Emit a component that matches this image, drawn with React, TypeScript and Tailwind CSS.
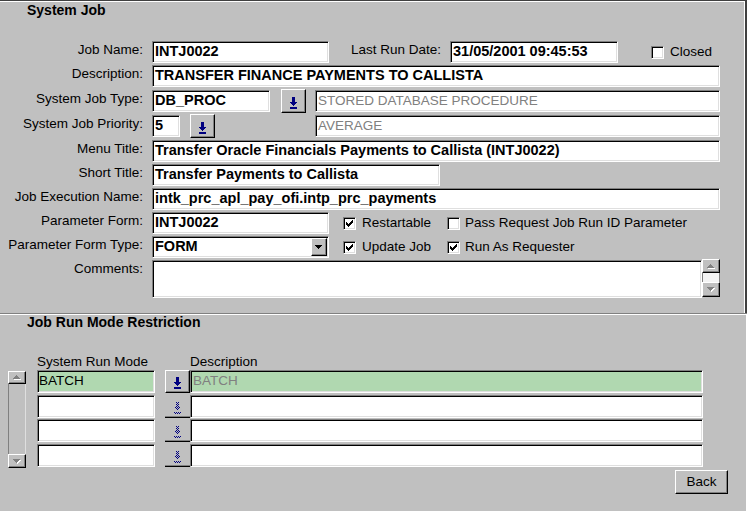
import type { ReactNode } from 'react';

const SUNKEN =
  'border border-t-[#808080] border-l-[#808080] border-b-white border-r-white shadow-[inset_1px_1px_0_#000,inset_-1px_-1px_0_#dfdfdf]';
const RAISED =
  'border border-t-white border-l-white border-b-black border-r-black shadow-[inset_-1px_-1px_0_#808080] bg-[#c0c0c0]';

function Label({ children, className = 'w-[143px]' }: { children: ReactNode; className?: string }) {
  return (
    <div className={`${className} shrink-0 h-[22px] text-right leading-[18px] whitespace-nowrap`}>{children}</div>
  );
}

function Field({
  value = '',
  className = '',
  h = 'h-[22px]',
  bold = true,
  muted = false,
  bg = 'bg-white',
}: {
  value?: string;
  className?: string;
  h?: string;
  bold?: boolean;
  muted?: boolean;
  bg?: string;
}) {
  return (
    <div
      className={`${SUNKEN} ${bg} ${h} ${className} shrink-0 flex items-center pl-[2px] overflow-hidden whitespace-nowrap ${
        bold ? 'font-bold text-[14.5px]' : 'text-[13.5px]'
      } ${muted ? 'text-[#808080]' : 'text-black'}`}
    >
      {value}
    </div>
  );
}

function DownArrow({ dotted = false }: { dotted?: boolean }) {
  const fill = dotted ? 'url(#dots)' : '#000080';
  return (
    <svg width="7" height="12" viewBox="0 0 7 12" shapeRendering="crispEdges" fill={fill}>
      <rect x="2" y="0" width="3" height="5" />
      <rect x="0" y="5" width="7" height="1" />
      <rect x="1" y="6" width="5" height="1" />
      <rect x="2" y="7" width="3" height="1" />
      <rect x="3" y="8" width="1" height="1" />
      <rect x="0" y="10" width="7" height="2" />
    </svg>
  );
}

function Tri({ up = false, black = false }: { up?: boolean; black?: boolean }) {
  const rows = up
    ? [
        [3, 1],
        [2, 3],
        [1, 5],
        [0, 7],
      ]
    : [
        [0, 7],
        [1, 5],
        [2, 3],
        [3, 1],
      ];
  return (
    <svg width="8" height="5" viewBox="0 0 8 5" shapeRendering="crispEdges">
      {!black &&
        rows.map(([x, w], i) => <rect key={'s' + i} x={x + 1} y={i + 1} width={w} height="1" fill="#fff" />)}
      {rows.map(([x, w], i) => (
        <rect key={i} x={x} y={i} width={w} height="1" fill={black ? '#000' : '#808080'} />
      ))}
    </svg>
  );
}

function Check({ checked = false, className = '' }: { checked?: boolean; className?: string }) {
  return (
    <div className={`${SUNKEN} bg-white w-[13px] h-[13px] shrink-0 flex items-center justify-center ${className}`}>
      {checked && (
        <svg width="7" height="7" viewBox="0 0 7 7" shapeRendering="crispEdges" fill="#000">
          <rect x="6" y="0" width="1" height="1" />
          <rect x="5" y="1" width="2" height="1" />
          <rect x="0" y="2" width="1" height="1" />
          <rect x="4" y="2" width="3" height="1" />
          <rect x="0" y="3" width="2" height="1" />
          <rect x="3" y="3" width="3" height="1" />
          <rect x="0" y="4" width="5" height="1" />
          <rect x="1" y="5" width="3" height="1" />
          <rect x="2" y="6" width="1" height="1" />
        </svg>
      )}
    </div>
  );
}

function LovButton({ className = '' }: { className?: string }) {
  return (
    <div className={`${RAISED} w-[25px] h-[24px] shrink-0 flex justify-center items-end pb-[3px] ${className}`}>
      <DownArrow />
    </div>
  );
}

const RUN_MODES = [
  { mode: 'BATCH', desc: 'BATCH' },
  { mode: '', desc: '' },
  { mode: '', desc: '' },
  { mode: '', desc: '' },
];

export default function App() {
  return (
    <div className="w-[747px] h-[511px] bg-[#c0c0c0] text-black font-['Liberation_Sans',Arial,sans-serif] text-[13.5px] overflow-hidden flex flex-col select-none">
      <svg width="0" height="0" className="absolute">
        <defs>
          <pattern id="dots" width="2" height="2" patternUnits="userSpaceOnUse">
            <rect x="0" y="0" width="1" height="1" fill="#000080" />
            <rect x="1" y="1" width="1" height="1" fill="#000080" />
          </pattern>
        </defs>
      </svg>

      {/* System Job */}
      <div className="h-[313px] shrink-0 border-t border-t-[#404040] border-r-2 border-r-[#404040]">
        <div className="h-full border-t border-t-white border-r border-r-white">
          <div className="pl-[27px] font-bold text-[14px] leading-[16px]">System Job</div>

          <div className="mt-[23px] flex flex-col">
            <div className="flex items-center h-[22px]">
              <Label>Job Name:</Label>
              <Field value="INTJ0022" className="ml-[9px] w-[177px]" />
              <Label className="w-[112px]">Last Run Date:</Label>
              <Field value="31/05/2001 09:45:53" className="ml-[9px] w-[168px]" />
              <Check className="ml-[33px]" />
              <span className="ml-[6px]">Closed</span>
            </div>

            <div className="mt-[2px] flex items-center h-[22px]">
              <Label>Description:</Label>
              <Field value="TRANSFER FINANCE PAYMENTS TO CALLISTA" className="ml-[9px] w-[568px]" />
            </div>

            <div className="mt-[3px] flex items-center h-[22px]">
              <Label>System Job Type:</Label>
              <Field value="DB_PROC" className="ml-[9px] w-[118px]" />
              <LovButton className="ml-[11px]" />
              <Field value="STORED DATABASE PROCEDURE" bold={false} muted className="ml-[9px] w-[405px]" />
            </div>

            <div className="mt-[3px] flex items-center h-[22px]">
              <Label>System Job Priority:</Label>
              <Field value="5" className="ml-[9px] w-[28px]" />
              <LovButton className="ml-[10px]" />
              <Field value="AVERAGE" bold={false} muted className="ml-[100px] w-[405px]" />
            </div>

            <div className="mt-[3px] flex items-center h-[22px]">
              <Label>Menu Title:</Label>
              <Field value="Transfer Oracle Financials Payments to Callista (INTJ0022)" className="ml-[9px] w-[568px]" />
            </div>

            <div className="mt-[2px] flex items-center h-[22px]">
              <Label>Short Title:</Label>
              <Field value="Transfer Payments to Callista" className="ml-[9px] w-[288px]" />
            </div>

            <div className="mt-[2px] flex items-center h-[22px]">
              <Label>Job Execution Name:</Label>
              <Field value="intk_prc_apl_pay_ofi.intp_prc_payments" className="ml-[9px] w-[568px]" />
            </div>

            <div className="mt-[2px] flex items-center h-[22px]">
              <Label>Parameter Form:</Label>
              <Field value="INTJ0022" className="ml-[9px] w-[177px]" />
              <div className="ml-[14px] w-[104px] flex items-center">
                <Check checked />
                <span className="ml-[6px]">Restartable</span>
              </div>
              <div className="flex items-center">
                <Check />
                <span className="ml-[5px]">Pass Request Job Run ID Parameter</span>
              </div>
            </div>

            <div className="mt-[2px] flex items-center h-[22px]">
              <Label>Parameter Form Type:</Label>
              <div
                className={`${SUNKEN} bg-white ml-[9px] w-[177px] h-[22px] shrink-0 flex items-center pl-[2px] font-bold text-[14.5px]`}
              >
                <span className="flex-1">FORM</span>
                <div className={`${RAISED} w-[16px] h-[18px] mr-[1px] flex items-center justify-center`}>
                  <Tri black />
                </div>
              </div>
              <div className="ml-[14px] w-[104px] flex items-center">
                <Check checked />
                <span className="ml-[6px]">Update Job</span>
              </div>
              <div className="flex items-center">
                <Check checked />
                <span className="ml-[5px]">Run As Requester</span>
              </div>
            </div>

            <div className="mt-[2px] flex items-start">
              <Label>Comments:</Label>
              <div className={`${SUNKEN} bg-white ml-[9px] w-[550px] h-[38px] shrink-0`} />
              <div className="w-[18px] h-[38px] -mt-[1px] flex flex-col">
                <div className={`${RAISED} h-[14px] flex items-center justify-center`}>
                  <Tri up />
                </div>
                <div className="flex-1 bg-[#f4f4f4] border-x border-x-[#808080]" />
                <div className={`${RAISED} h-[15px] flex items-center justify-center`}>
                  <Tri />
                </div>
              </div>
            </div>
          </div>
        </div>
      </div>

      <div className="h-[2px] shrink-0 border-t border-t-[#808080] border-b border-b-white" />

      {/* Job Run Mode Restriction */}
      <div className="flex-1 flex flex-col border-r border-r-white">
        <div className="pl-[27px] font-bold text-[14px] leading-[14px]">Job Run Mode Restriction</div>

        <div className="mt-[25px] flex leading-[16px]">
          <span className="ml-[37px] w-[153px]">System Run Mode</span>
          <span>Description</span>
        </div>

        <div className="flex items-start">
          <div className="ml-[8px] mt-[1px] w-[18px] h-[97px] flex flex-col">
            <div className={`${RAISED} h-[13px] flex items-center justify-center`}>
              <Tri up />
            </div>
            <div className="flex-1 border-l border-l-[#808080] border-r border-r-[#dfdfdf]" />
            <div className={`${RAISED} h-[14px] flex items-center justify-center`}>
              <Tri />
            </div>
          </div>

          <div className="ml-[11px] flex flex-col gap-[1.67px]">
            {RUN_MODES.map((r, i) => {
              const first = i === 0;
              const bg = first ? 'bg-[#b0d8b0]' : 'bg-white';
              return (
                <div key={i} className="flex h-[23px]">
                  <Field value={r.mode} h="h-[23px]" bold={false} bg={bg} className="w-[118px] !pl-[1px]" />
                  {first ? (
                    <div className={`${RAISED} ml-[10px] w-[25px] h-[23px] shrink-0 flex justify-center items-end pb-[3px]`}>
                      <DownArrow />
                    </div>
                  ) : (
                    <div className="ml-[10px] w-[25px] h-[23px] shrink-0 flex justify-center items-end pb-[3px] border-b border-b-black shadow-[inset_0_-1px_0_#808080]">
                      <DownArrow dotted />
                    </div>
                  )}
                  <Field value={r.desc} h="h-[23px]" bold={false} muted bg={bg} className="w-[513px]" />
                </div>
              );
            })}
          </div>
        </div>

        <div className="mt-[2px] self-end mr-[18px]">
          <div className={`${RAISED} w-[53px] h-[24px] flex items-center justify-center`}>Back</div>
        </div>
      </div>
    </div>
  );
}
